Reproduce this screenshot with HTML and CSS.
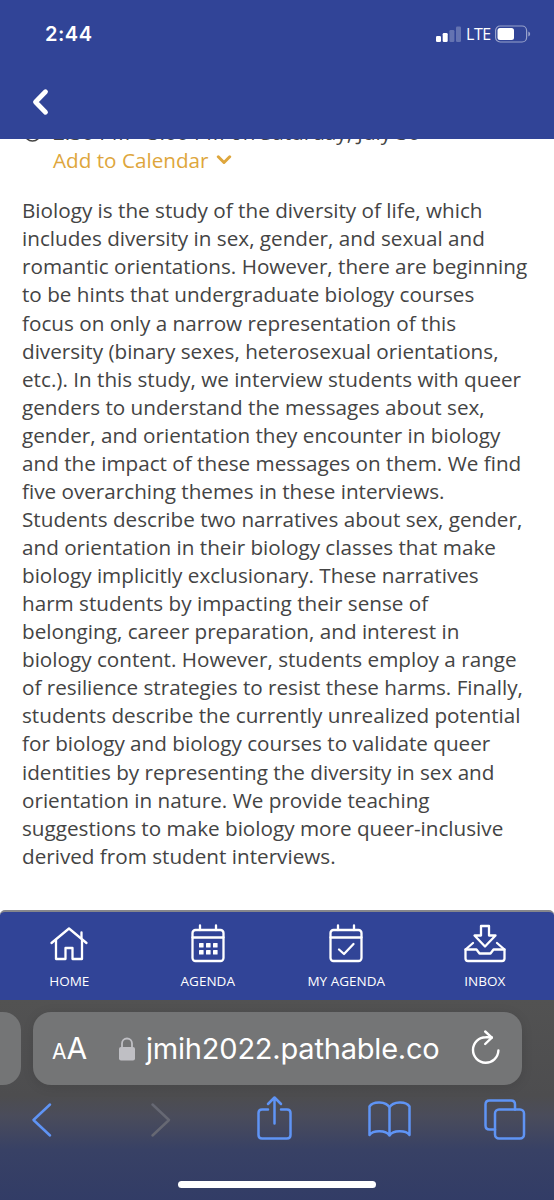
FILE: index.html
```html
<!DOCTYPE html>
<html lang="en">
<head>
<meta charset="UTF-8">
<title>Session</title>
<meta name="viewport" content="width=device-width, initial-scale=1.0">
<link rel="stylesheet" href="styles.css">
</head>

<body>

<!-- HEADER -->
<header class="header">
    <div class="status">
        <span class="time">2:44</span>
        <div class="status-right">
            <svg class="signal" width="25" height="16" viewBox="0 0 25 16" fill="#fff">
                <rect x="0" y="10" width="5" height="6" rx="1.3"/>
                <rect x="6.7" y="7" width="5" height="9" rx="1.3"/>
                <rect x="13.4" y="4" width="5" height="12" rx="1.3" opacity=".25"/>
                <rect x="20" y="0.5" width="5" height="15.5" rx="1.3" opacity=".25"/>
            </svg>
            <span class="lte">LTE</span>
            <svg class="battery" width="36" height="18" viewBox="0 0 36 18">
                <rect x="0.6" y="1" width="31" height="16" rx="4.5" fill="none" stroke="#fff" stroke-opacity=".5" stroke-width="1.2"/>
                <rect x="2.5" y="3" width="16.5" height="12" rx="2.5" fill="#fff"/>
                <path d="M33.3 6.6q1.9.6 1.9 2.4t-1.9 2.4z" fill="#fff" opacity=".5"/>
            </svg>
        </div>
    </div>
    <svg class="back" width="18" height="28" viewBox="0 0 18 28" fill="none" stroke="#fff" stroke-width="4.8" stroke-linecap="round" stroke-linejoin="round">
        <path d="M13.5 3.8L3.5 14L13.5 24.2"/>
    </svg>
</header>

<!-- SESSION -->
<main class="content">
    <div class="when">
        <svg class="clock" width="17" height="17" viewBox="0 0 17 17" fill="none" stroke="#444" stroke-width="1.5">
            <circle cx="8.5" cy="8.5" r="7.6"/>
            <path d="M8.5 4v5h3"/>
        </svg>
        <span>2:30 PM - 3:00 PM on Saturday, July 30</span>
    </div>
    <div class="calendar">
        <span>Add to Calendar</span>
        <svg width="16" height="11" viewBox="0 0 16 11" fill="none" stroke="#dea63c" stroke-width="3" stroke-linecap="round" stroke-linejoin="round">
            <path d="M2.3 1.8L8 7.5L13.7 1.8"/>
        </svg>
    </div>
    <p class="abstract">
        Biology is the study of the diversity of life, which<br>
        includes diversity in sex, gender, and sexual and<br>
        romantic orientations. However, there are beginning<br>
        to be hints that undergraduate biology courses<br>
        focus on only a narrow representation of this<br>
        diversity (binary sexes, heterosexual orientations,<br>
        etc.). In this study, we interview students with queer<br>
        genders to understand the messages about sex,<br>
        gender, and orientation they encounter in biology<br>
        and the impact of these messages on them. We find<br>
        five overarching themes in these interviews.<br>
        Students describe two narratives about sex, gender,<br>
        and orientation in their biology classes that make<br>
        biology implicitly exclusionary. These narratives<br>
        harm students by impacting their sense of<br>
        belonging, career preparation, and interest in<br>
        biology content. However, students employ a range<br>
        of resilience strategies to resist these harms. Finally,<br>
        students describe the currently unrealized potential<br>
        for biology and biology courses to validate queer<br>
        identities by representing the diversity in sex and<br>
        orientation in nature. We provide teaching<br>
        suggestions to make biology more queer-inclusive<br>
        derived from student interviews.
    </p>
</main>

<!-- TABS -->
<nav class="tabs">
    <a class="tab">
        <svg width="44" height="42" viewBox="0 0 44 42">
            <path d="M4.5 20L22 5.5L39.5 20"/>
            <path d="M9 17V36H18.5V25H25.5V36H35V17M34.5 15V9.5"/>
        </svg>
        <span>HOME</span>
    </a>
    <a class="tab">
        <svg width="44" height="42" viewBox="0 0 44 42">
            <rect x="6.5" y="7" width="31" height="31" rx="3"/>
            <path d="M6.5 14.5H37.5M14 2.5V7M30 2.5V7"/>
            <g class="days">
                <rect x="13" y="20" width="4.6" height="4.6" rx=".6"/>
                <rect x="20" y="20" width="4.6" height="4.6" rx=".6"/>
                <rect x="27" y="20" width="4.6" height="4.6" rx=".6"/>
                <rect x="13" y="27" width="4.6" height="4.6" rx=".6"/>
                <rect x="20" y="27" width="4.6" height="4.6" rx=".6"/>
                <rect x="27" y="27" width="4.6" height="4.6" rx=".6"/>
            </g>
        </svg>
        <span>AGENDA</span>
    </a>
    <a class="tab">
        <svg width="44" height="42" viewBox="0 0 44 42">
            <rect x="6.5" y="7" width="31" height="31" rx="3"/>
            <path d="M6.5 14.5H37.5M14 2.5V7M30 2.5V7"/>
            <path d="M15 26.5L20 31L29.5 21"/>
        </svg>
        <span>MY AGENDA</span>
    </a>
    <a class="tab">
        <svg width="44" height="42" viewBox="0 0 44 42">
            <path d="M18 3H26V12.5H32.5L22 23.5L11.5 12.5H18Z"/>
            <path d="M10 20L2.5 26.5V35.5Q2.5 38 5 38H39Q41.5 38 41.5 35.5V26.5L34 20"/>
            <path d="M2.5 26.5H13.5L16.5 30.5H27.5L30.5 26.5H41.5"/>
        </svg>
        <span>INBOX</span>
    </a>
</nav>

<!-- BROWSER BAR -->
<footer class="browser">
    <div class="address-row">
        <div class="prev-page"></div>
        <div class="address">
            <span class="aa"><small>A</small>A</span>
            <svg class="lock" width="16" height="24" viewBox="0 0 16 24">
                <path d="M3 11V6.5a5 5 0 0 1 10 0V11" fill="none" stroke="#bfbfc4" stroke-width="1.8"/>
                <rect x="0" y="10" width="16" height="13.5" rx="2" fill="#bfbfc4"/>
            </svg>
            <span class="url">jmih2022.pathable.co</span>
            <svg class="reload" width="30" height="34" viewBox="0 0 30 34" fill="none" stroke="#fff" stroke-width="2.4" stroke-linecap="round" stroke-linejoin="round">
                <path d="M27.4 20.5A12.7 12.7 0 1 1 14.7 7.3Q18 7.2 20.8 7.5"/>
                <path d="M14.2 1.5L20.8 7.6L14.2 14"/>
            </svg>
        </div>
    </div>
    <div class="tools">
        <svg width="44" height="48" viewBox="0 0 44 48"><path d="M28 9.5L11.5 25L28 40.5"/></svg>
        <svg class="off" width="44" height="48" viewBox="0 0 44 48"><path d="M15.5 9.5L32 25L15.5 40.5"/></svg>
        <svg width="44" height="48" viewBox="0 0 44 48">
            <path d="M15 14.5H9Q5.5 14.5 5.5 18V40Q5.5 43.5 9 43.5H34Q37.5 43.5 37.5 40V18Q37.5 14.5 34 14.5H28"/>
            <path d="M21.5 28.5V2.5M15 9L21.5 2.5L28 9"/>
        </svg>
        <svg width="44" height="48" viewBox="0 0 44 48">
            <path d="M21.5 12.5C18 6 5 6 1.5 11.5V40C5 35 18 35 21.5 40.5C25 35 38 35 41.5 40V11.5C38 6 25 6 21.5 12.5ZM21.5 12.5V40.5"/>
        </svg>
        <svg width="44" height="48" viewBox="0 0 44 48">
            <rect x="12" y="14.5" width="29" height="29" rx="4"/>
            <path d="M12 34.5H6.5Q2.5 34.5 2.5 30.5V9.5Q2.5 5.5 6.5 5.5H28Q32 5.5 32 9.5V14.5"/>
        </svg>
    </div>
    <div class="home-bar"></div>
</footer>

</body>
</html>
```
FILE: styles.css
```css
* {
    box-sizing: border-box;
}

body {
    margin: 0;
    height: 1200px;
    overflow: hidden;
    display: flex;
    flex-direction: column;
    font-family: "Open Sans", "Noto Sans", sans-serif;
    background: white;
    color: #444;
}

svg {
    display: block;
    flex: none;
}

/* HEADER */
.header {
    position: relative;
    z-index: 1;
    flex: none;
    height: 139px;
    padding: 20px 25px 0 45px;
    background: #314497;
    color: white;
}

.status {
    display: flex;
    justify-content: space-between;
    align-items: center;
    height: 27px;
}

.time {
    font: 600 20px Inter, sans-serif;
    letter-spacing: 0.5px;
}

.status-right {
    display: flex;
    align-items: center;
}

.signal {
    margin-right: 5px;
}

.lte {
    width: 29px;
    font: 500 16px/20px "Open Sans", sans-serif;
    letter-spacing: -0.4px;
}

.battery {
    margin-right: -2px;
}

.back {
    margin: 41px 0 0 -13px;
}

/* SESSION */
.content {
    flex: none;
    height: 788px;
    margin-top: -17px;
    padding-left: 22px;
}

.when {
    display: flex;
    align-items: center;
    gap: 12px;
    height: 20px;
    padding-left: 2px;
    font-size: 20.68px;
    white-space: nowrap;
}

.clock {
    margin-top: 2px;
}

.calendar {
    display: flex;
    align-items: center;
    gap: 7px;
    height: 36px;
    padding-left: 31px;
    font-size: 20.68px;
    color: #dea63c;
}

.abstract {
    margin: 18.3px 0 0;
    font-size: 20.68px;
    line-height: 28.07px;
    white-space: nowrap;
}

/* TABS */
.tabs {
    flex: none;
    display: grid;
    grid-template-columns: repeat(4, 1fr);
    height: 90px;
    padding-top: 11px;
    border-top: 2px solid #85868c;
    border-radius: 5px 5px 0 0;
    background: #314497;
}

.tab {
    display: flex;
    flex-direction: column;
    align-items: center;
    color: white;
    font-size: 13.5px;
    line-height: 18px;
}

.tab svg {
    fill: none;
    stroke: white;
    stroke-width: 2.3;
    stroke-linecap: round;
    stroke-linejoin: round;
}

.tab .days {
    fill: white;
    stroke: none;
}

.tab span {
    margin-top: 7px;
}

/* BROWSER BAR */
.browser {
    flex: none;
    height: 200px;
    padding-top: 12px;
    background: linear-gradient(#525252 0, #4d4d4f 48%, #4a4c5b 58%, #384165 75%, #323c66 100%);
}

.address-row {
    display: flex;
    gap: 12px;
    height: 73px;
}

.prev-page {
    width: 21px;
    background: #747576;
    border-radius: 0 18px 18px 0;
}

.address {
    display: flex;
    align-items: center;
    width: 489px;
    padding-left: 19px;
    background: #747576;
    border-radius: 18px;
    box-shadow: 0 2px 12px rgba(0,0,0,0.1);
    color: white;
}

.aa {
    width: 67px;
    padding-top: 3px;
    font: 30px/40px Inter, sans-serif;
}

.aa small {
    font-size: 21px;
}

.url {
    width: 324px;
    margin-left: 11px;
    font: 29px/40px Inter, sans-serif;
    letter-spacing: -0.2px;
    white-space: nowrap;
}

.reload {
    margin: -4px 0 0 1px;
}

.tools {
    display: flex;
    justify-content: space-between;
    height: 48px;
    margin-top: 10px;
    padding: 0 27px 0 22px;
}

.tools svg {
    fill: none;
    stroke: #5f94f5;
    stroke-width: 2.5;
    stroke-linecap: round;
    stroke-linejoin: round;
}

.tools .off {
    stroke: #666873;
}

.home-bar {
    width: 198px;
    height: 7px;
    margin: 38px auto 0;
    border-radius: 4px;
    background: white;
}
```
